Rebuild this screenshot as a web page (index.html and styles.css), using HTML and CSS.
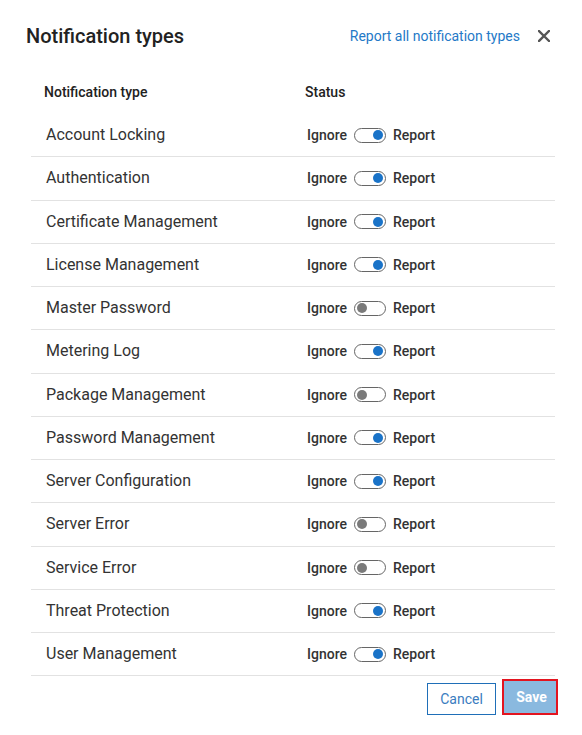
FILE: index.html
```html
<!DOCTYPE html>
<html>
<head>
<meta charset="utf-8">
<link rel="stylesheet" href="styles.css">
</head>
<body>
<div class="dialog">
  <div class="header">
    <h1 class="title">Notification types</h1>
    <div class="header-actions">
      <a class="link" href="#">Report all notification types</a>
      <button class="close" aria-label="Close">
        <svg width="12" height="12" viewBox="0 0 12 12"><path d="M1 1L11 11M11 1L1 11" stroke="#555" stroke-width="2.4" stroke-linecap="square"/></svg>
      </button>
    </div>
  </div>
  <div class="table">
    <div class="thead">
      <div class="th name">Notification type</div>
      <div class="th status">Status</div>
    </div>
    <div class="row"><div class="name">Account Locking</div><div class="status"><span class="lbl">Ignore</span><span class="toggle on"></span><span class="lbl">Report</span></div></div>
    <div class="row"><div class="name">Authentication</div><div class="status"><span class="lbl">Ignore</span><span class="toggle on"></span><span class="lbl">Report</span></div></div>
    <div class="row"><div class="name">Certificate Management</div><div class="status"><span class="lbl">Ignore</span><span class="toggle on"></span><span class="lbl">Report</span></div></div>
    <div class="row"><div class="name">License Management</div><div class="status"><span class="lbl">Ignore</span><span class="toggle on"></span><span class="lbl">Report</span></div></div>
    <div class="row"><div class="name">Master Password</div><div class="status"><span class="lbl">Ignore</span><span class="toggle"></span><span class="lbl">Report</span></div></div>
    <div class="row"><div class="name">Metering Log</div><div class="status"><span class="lbl">Ignore</span><span class="toggle on"></span><span class="lbl">Report</span></div></div>
    <div class="row"><div class="name">Package Management</div><div class="status"><span class="lbl">Ignore</span><span class="toggle"></span><span class="lbl">Report</span></div></div>
    <div class="row"><div class="name">Password Management</div><div class="status"><span class="lbl">Ignore</span><span class="toggle on"></span><span class="lbl">Report</span></div></div>
    <div class="row"><div class="name">Server Configuration</div><div class="status"><span class="lbl">Ignore</span><span class="toggle on"></span><span class="lbl">Report</span></div></div>
    <div class="row"><div class="name">Server Error</div><div class="status"><span class="lbl">Ignore</span><span class="toggle"></span><span class="lbl">Report</span></div></div>
    <div class="row"><div class="name">Service Error</div><div class="status"><span class="lbl">Ignore</span><span class="toggle"></span><span class="lbl">Report</span></div></div>
    <div class="row"><div class="name">Threat Protection</div><div class="status"><span class="lbl">Ignore</span><span class="toggle on"></span><span class="lbl">Report</span></div></div>
    <div class="row"><div class="name">User Management</div><div class="status"><span class="lbl">Ignore</span><span class="toggle on"></span><span class="lbl">Report</span></div></div>
  </div>
  <div class="footer">
    <button class="btn cancel">Cancel</button>
    <button class="btn save">Save</button>
  </div>
</div>
</body>
</html>
```
FILE: styles.css
```css
html, body {
  margin: 0;
  padding: 0;
  background: #fff;
}
body {
  font-family: Roboto, "Liberation Sans", sans-serif;
  color: #333;
}
.dialog {
  padding: 24px 24px 0 26px;
}
.header {
  display: flex;
  align-items: center;
  justify-content: space-between;
  height: 24px;
}
.title {
  margin: 0;
  font-size: 20px;
  line-height: 24px;
  font-weight: 500;
  color: #222;
}
.header-actions {
  display: flex;
  align-items: center;
  gap: 18px;
  margin-right: 8px;
}
.link {
  font-size: 14px;
  color: #2479c7;
  text-decoration: none;
}
.close {
  border: 0;
  background: none;
  padding: 0;
  width: 12px;
  height: 12px;
  display: flex;
}
.table {
  margin: 25px 3px 0 5px;
}
.thead {
  display: flex;
  align-items: center;
  height: 41px;
  padding-bottom: 4px;
  box-sizing: border-box;
}
.th {
  font-size: 14px;
  font-weight: 500;
  color: #222;
}
.th.name {
  width: 261px;
  padding-left: 13px;
}
.row {
  display: flex;
  align-items: center;
  box-sizing: border-box;
  height: 43.25px;
  border-bottom: 1px solid #e2e2e2;
}
.row .name {
  width: 260px;
  padding-left: 15px;
  font-size: 16px;
  color: #333;
  padding-bottom: 1px;
}
.row .status {
  display: flex;
  align-items: center;
  gap: 6px;
  padding-left: 1px;
}
.lbl {
  font-size: 14px;
  font-weight: 500;
  color: #333;
}
.toggle {
  position: relative;
  box-sizing: border-box;
  width: 32px;
  height: 15px;
  border: 1px solid #666;
  border-radius: 8px;
  margin: 0 1px;
}
.toggle::after {
  content: "";
  position: absolute;
  top: 1.5px;
  left: 2px;
  width: 10px;
  height: 10px;
  border-radius: 50%;
  background: #7a7a7a;
}
.toggle.on::after {
  left: auto;
  right: 2px;
  background: #1a73c8;
}
.footer {
  display: flex;
  justify-content: flex-end;
  align-items: flex-end;
  gap: 6px;
  padding-top: 3px;
}
.btn {
  box-sizing: border-box;
  height: 32px;
  font-family: Roboto, "Liberation Sans", sans-serif;
  font-size: 14px;
  padding: 0;
}
.cancel {
  width: 69px;
  border: 1px solid #1f6fb8;
  background: #fff;
  color: #3a7cc0;
}
.save {
  width: 56px;
  height: 36px;
  border: 2px solid #e3141f;
  background: #8ab9df;
  color: #fff;
  font-weight: 700;
  padding-left: 3px;
}
```
